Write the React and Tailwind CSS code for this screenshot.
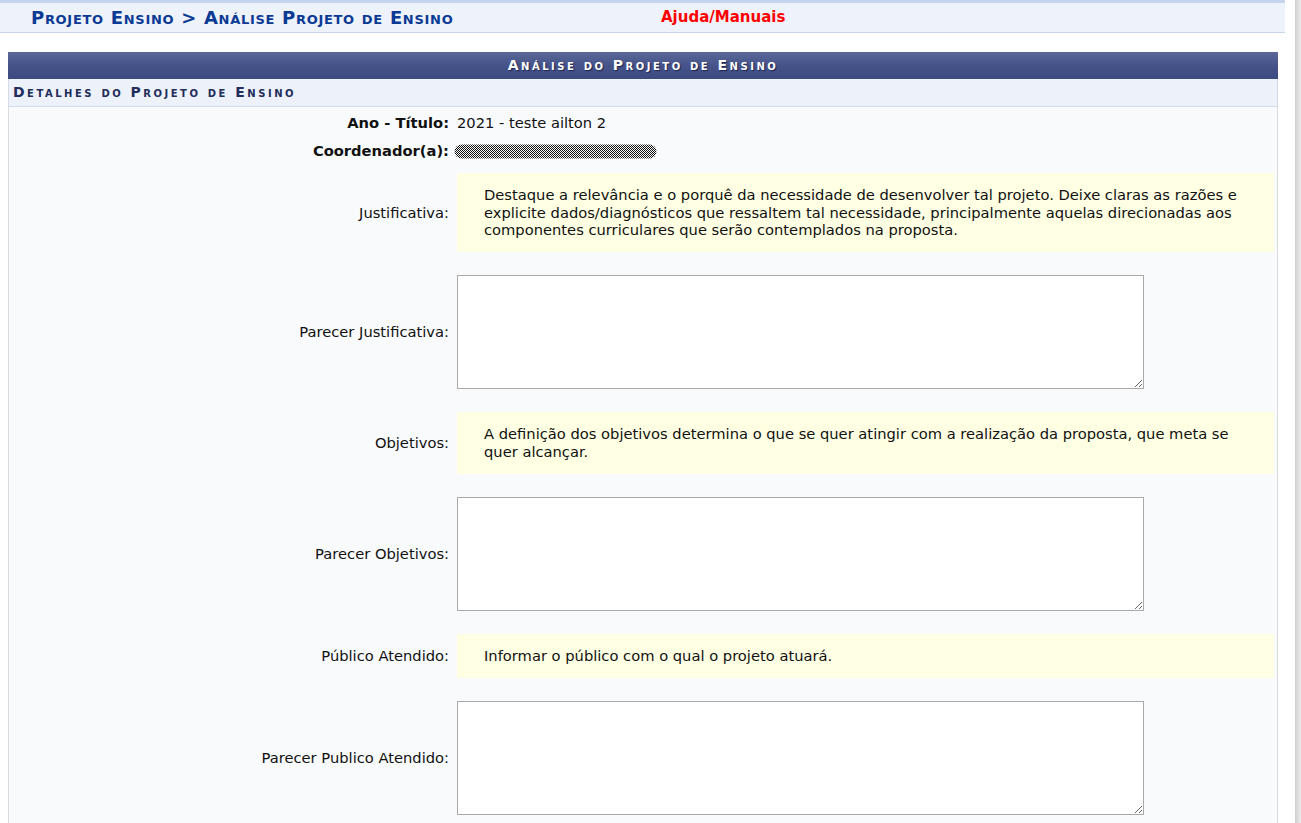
import React from 'react';

const font = { fontFamily: '"DejaVu Sans", Verdana, sans-serif' };

// Field rows of the analysis form
const campos = [
    {
        label: 'Justificativa:',
        texto: 'Destaque a relevância e o porquê da necessidade de desenvolver tal projeto. Deixe claras as razões e explicite dados/diagnósticos que ressaltem tal necessidade, principalmente aquelas direcionadas aos componentes curriculares que serão contemplados na proposta.',
        parecer: 'Parecer Justificativa:',
    },
    {
        label: 'Objetivos:',
        texto: 'A definição dos objetivos determina o que se quer atingir com a realização da proposta, que meta se quer alcançar.',
        parecer: 'Parecer Objetivos:',
    },
    {
        label: 'Público Atendido:',
        texto: 'Informar o público com o qual o projeto atuará.',
        parecer: 'Parecer Publico Atendido:',
    },
];

function Redacted() {
    return (
        <svg width="203" height="15" viewBox="0 0 203 15" className="block">
            <defs>
                <pattern id="xadrez" width="2" height="2" patternUnits="userSpaceOnUse">
                    <rect width="2" height="2" fill="#fff" />
                    <rect width="1" height="1" fill="#111" />
                    <rect x="1" y="1" width="1" height="1" fill="#111" />
                </pattern>
            </defs>
            <rect x="0.5" y="0.5" width="202" height="14" rx="7" fill="url(#xadrez)" />
        </svg>
    );
}

function Linha({ label, bold, children, className = '' }) {
    return (
        <div className={`flex items-center ${className}`}>
            <div className={`w-[440px] shrink-0 text-right ${bold ? 'font-bold' : ''}`}>{label}</div>
            <div className="ml-[8px] mr-[3px] flex-1">{children}</div>
        </div>
    );
}

export default function App() {
    return (
        <div className="flex min-h-[823px] bg-white text-[14.7px] leading-[17.5px] text-[#111]" style={font}>
            <div className="w-[1295px] shrink-0">
                {/* HEADER */}
                <div className="flex h-[33px] w-[1285px] items-center border-t-[3px] border-b border-[#c6d4ee] bg-[#eef2fa]">
                    <div className="ml-[31px] w-[630px] text-[18px] font-bold tracking-[0.7px] text-[#0a3a94] [font-variant:small-caps]">
                        Projeto Ensino &gt; Análise Projeto de Ensino
                    </div>
                    <div className="text-[15px] font-bold text-[#ff0000]">Ajuda/Manuais</div>
                </div>

                {/* PANEL */}
                <div className="ml-[8px] mt-[19px] w-[1270px]">
                    <div className="flex h-[27px] items-center justify-center bg-gradient-to-b from-[#5a6797] via-[#46538a] to-[#3c4a80] text-[14px] font-bold tracking-[2.5px] text-white [font-variant:small-caps] [text-shadow:1px_1px_1px_#1c2550]">
                        Análise do Projeto de Ensino
                    </div>
                    <div className="flex h-[28px] items-center border-x border-b border-[#d3dbe9] bg-[#edf1f9] pl-[4px] text-[14px] font-bold tracking-[2.5px] text-[#222d5c] [font-variant:small-caps]">
                        Detalhes do Projeto de Ensino
                    </div>
                    <div className="border-x border-[#dcdcdc] bg-[#f9fafc] pt-[2px] pb-[20px]">
                        <Linha label="Ano - Título:" bold className="h-[28px]">2021 - teste ailton 2</Linha>
                        <Linha label="Coordenador(a):" bold className="h-[28px]">
                            <div className="-ml-[3px]"><Redacted /></div>
                        </Linha>
                        <div className="mt-[8px] flex flex-col gap-[23px]">
                            {campos.map(c => (
                                <React.Fragment key={c.label}>
                                    <Linha label={c.label}>
                                        <div className="bg-[#ffffe3] py-[13.25px] pl-[27px] pr-[30px]">{c.texto}</div>
                                    </Linha>
                                    <Linha label={c.parecer}>
                                        <textarea className="block h-[114px] w-[687px] border border-[#a9a9a9] bg-white" />
                                    </Linha>
                                </React.Fragment>
                            ))}
                        </div>
                    </div>
                </div>
            </div>
            <div className="w-[6px] shrink-0 bg-gradient-to-r from-[#cfcfcf] to-[#ededed]" />
        </div>
    );
}
